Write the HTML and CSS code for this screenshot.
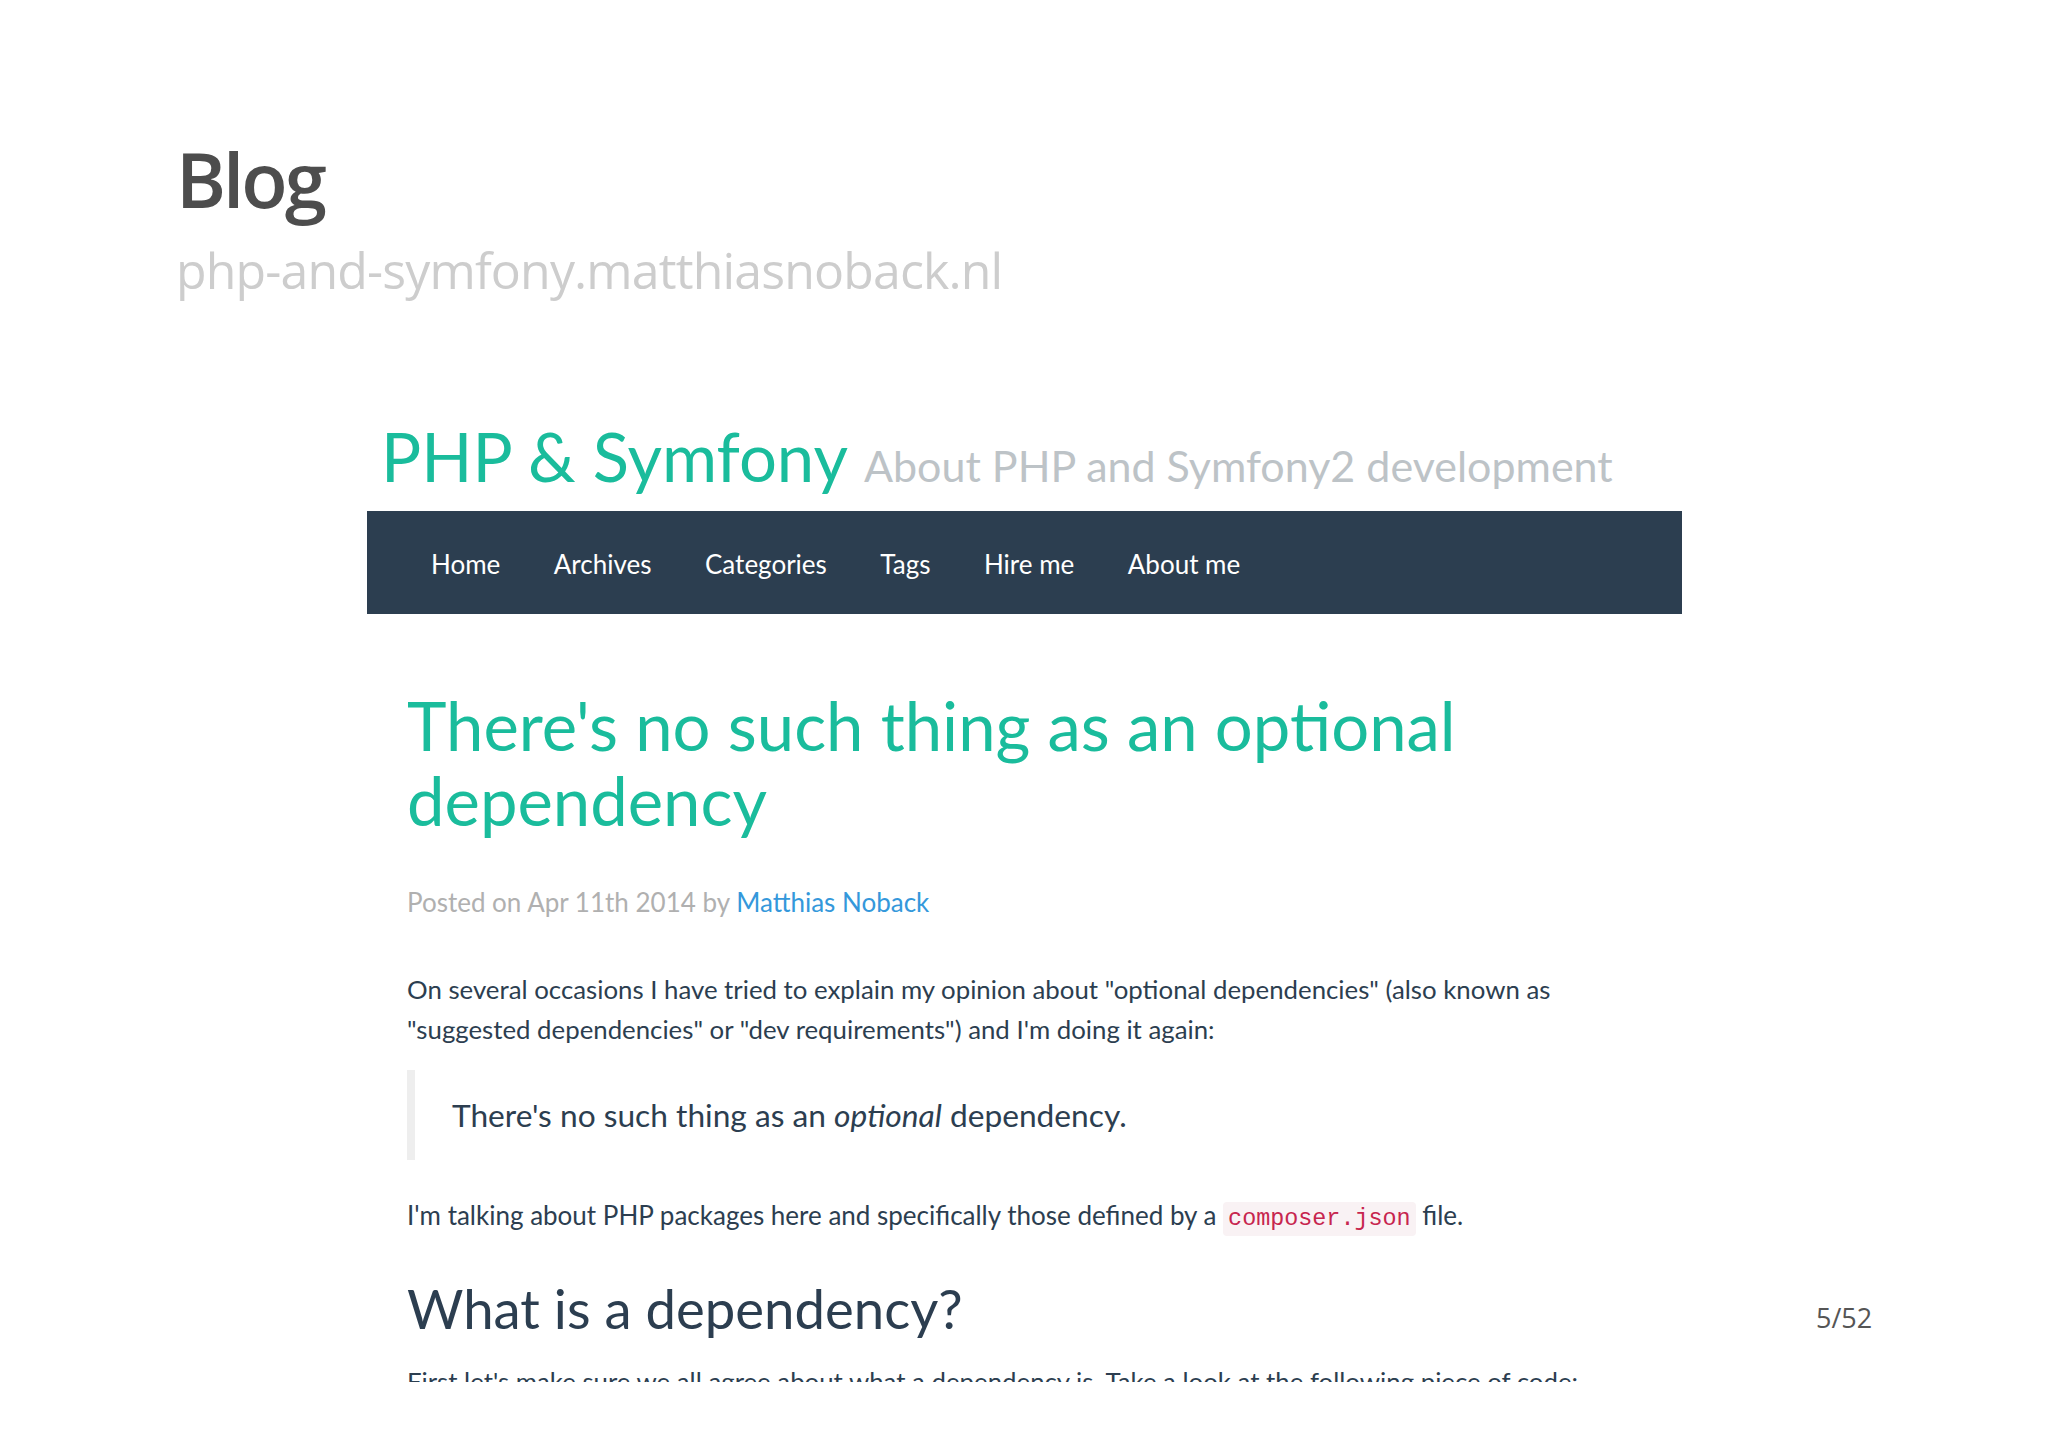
FILE: index.html
```html
<!DOCTYPE html>
<html lang="en">
<head>
<meta charset="utf-8">
<title>Blog</title>
<link rel="stylesheet" href="styles.css">
</head>
<body>
<div class="slide">
  <header class="deck-head">
    <h1 class="deck-title">Blog</h1>
    <div class="deck-sub">php-and-symfony.matthiasnoback.nl</div>
  </header>

  <div class="shot">
    <div class="brand">
      <span class="brand-name">PHP &amp; Symfony</span>
      <span class="brand-tag">About PHP and Symfony2 development</span>
    </div>
    <nav class="nav">
      <a class="nav-item">Home</a>
      <a class="nav-item">Archives</a>
      <a class="nav-item">Categories</a>
      <a class="nav-item">Tags</a>
      <a class="nav-item">Hire me</a>
      <a class="nav-item">About me</a>
    </nav>
    <article class="post">
      <h2 class="post-title">There's no such thing as an optional dependency</h2>
      <div class="meta">Posted on Apr 11th 2014 by <a class="author">Matthias Noback</a></div>
      <p class="p1">On several occasions I have tried to explain my opinion about "optional dependencies" (also known as "suggested dependencies" or "dev requirements") and I'm doing it again:</p>
      <blockquote class="quote">There's no such thing as an <em>optional</em> dependency.</blockquote>
      <p class="p2">I'm talking about PHP packages here and specifically those defined by a <code class="code">composer.json</code> file.</p>
      <h3 class="sub">What is a dependency?</h3>
      <p class="p3">First let's make sure we all agree about what a dependency is. Take a look at the following piece of code:</p>
    </article>
  </div>

  <div class="pager">5/52</div>
</div>
</body>
</html>
```

FILE: styles.css
```css
html, body {
  margin: 0;
  padding: 0;
  background: #ffffff;
}

.slide {
  position: relative;
  width: 2048px;
  height: 1448px;
  overflow: hidden;
  background: #ffffff;
}

.deck-head {
  padding: 134px 0 0 176px;
  font-family: "Open Sans", sans-serif;
}

.deck-title {
  margin: 0;
  font-size: 76px;
  line-height: 90px;
  font-weight: 600;
  letter-spacing: -3px;
  color: #4d4d4d;
}

.deck-sub {
  margin-top: 16px;
  font-size: 50px;
  line-height: 60px;
  font-weight: 400;
  letter-spacing: -0.85px;
  color: #cdcdcd;
}

.shot {
  margin: 116px 0 0 367px;
  width: 1315px;
  height: 966px;
  overflow: hidden;
  font-family: Lato, "Open Sans", sans-serif;
  color: #2c3e50;
}

.brand {
  display: flex;
  align-items: baseline;
  gap: 16px;
  padding-left: 14px;
  height: 80px;
}

.brand-name {
  font-size: 67px;
  line-height: 80px;
  color: #1abc9c;
}

.brand-tag {
  font-size: 43px;
  line-height: 80px;
  color: #bdc3c7;
}

.nav {
  margin-top: 15px;
  height: 103px;
  background: #2c3e50;
  display: flex;
  align-items: center;
  gap: 53.5px;
  padding-left: 64px;
}

.nav-item {
  font-size: 26px;
  line-height: 103px;
  padding-top: 3px;
  color: #ffffff;
}

.post {
  padding-left: 40px;
  padding-right: 40px;
}

.post-title {
  margin: 74px 0 0;
  font-size: 67px;
  line-height: 75px;
  font-weight: 400;
  color: #1abc9c;
  width: 1100px;
}

.meta {
  margin-top: 45px;
  font-size: 26px;
  line-height: 39px;
  color: #b0b0b0;
}

.author {
  color: #3498db;
}

.p1, .p2, .p3 {
  margin: 0;
  font-size: 25.8px;
  line-height: 40px;
  color: #2c3e50;
}

.p1 {
  margin-top: 47px;
  width: 1160px;
}

.quote {
  margin: 21px 0 0;
  border-left: 8px solid #eeeeee;
  padding: 21px 0 21px 37px;
  font-size: 31.7px;
  line-height: 48px;
  color: #2c3e50;
}

.p2 {
  margin-top: 35px;
  font-size: 26px;
}

.code {
  font-family: "Liberation Mono", monospace;
  font-size: 23.4px;
  color: #c7254e;
  background: #f9f2f4;
  padding: 4px 5px;
  border-radius: 4px;
}

.sub {
  margin: 38px 0 0;
  font-size: 54.5px;
  line-height: 62px;
  font-weight: 400;
  color: #2c3e50;
}

.p3 {
  margin-top: 22px;
}

.pager {
  position: absolute;
  left: 1816px;
  top: 1300px;
  font-family: "Open Sans", sans-serif;
  font-size: 27px;
  line-height: 36px;
  color: #555555;
}
```
